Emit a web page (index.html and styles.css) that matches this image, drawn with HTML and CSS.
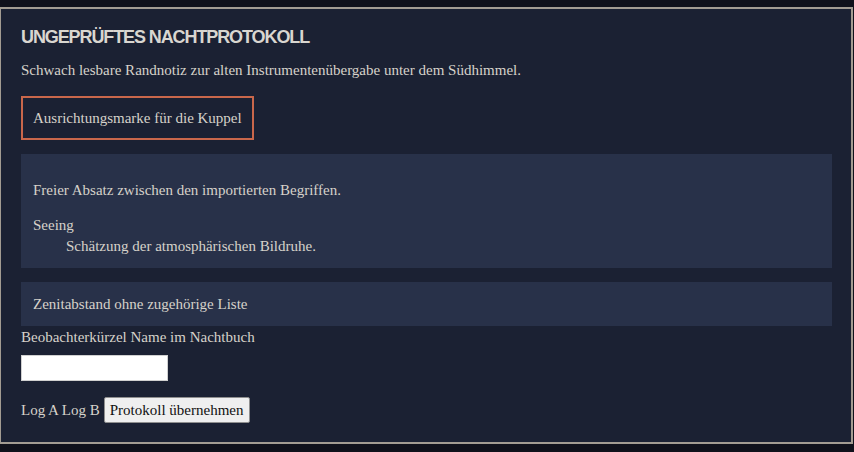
FILE: index.html
```html
<!DOCTYPE html>
<html lang="de">
<head>
<meta charset="utf-8">
<title>Nachtprotokoll</title>
<link rel="stylesheet" href="styles.css">
</head>
<body>
<main class="frame">
  <h1 class="title">UNGEPRÜFTES NACHTPROTOKOLL</h1>
  <p class="note">Schwach lesbare Randnotiz zur alten Instrumentenübergabe unter dem Südhimmel.</p>
  <div class="mark">Ausrichtungsmarke für die Kuppel</div>
  <section class="panel panel-terms">
    <p class="free">Freier Absatz zwischen den importierten Begriffen.</p>
    <dl class="terms">
      <dt>Seeing</dt>
      <dd>Schätzung der atmosphärischen Bildruhe.</dd>
    </dl>
  </section>
  <section class="panel panel-single">Zenitabstand ohne zugehörige Liste</section>
  <label class="field-label" for="obs">Beobachterkürzel Name im Nachtbuch</label>
  <input class="field" id="obs" type="text">
  <div class="actions">
    <span class="logs">Log A Log B</span>
    <button class="submit" type="button">Protokoll übernehmen</button>
  </div>
</main>
</body>
</html>
```
FILE: styles.css
```css
html, body {
  margin: 0;
  padding: 0;
  background: #10111b;
}
body {
  padding-top: 7px;
  height: 452px;
  box-sizing: border-box;
}
.frame {
  display: flex;
  flex-direction: column;
  align-items: flex-start;
  width: 853px;
  height: 437px;
  box-sizing: border-box;
  border: 2px solid #a39c92;
  border-left-width: 1px;
  background: #1b2133;
  padding: 16px 19px 0 20px;
  color: #d6d2ca;
  font-family: "Liberation Serif", "Times New Roman", serif;
  font-size: 15px;
  line-height: 20px;
}
.title {
  margin: 0;
  font-family: "Liberation Sans", Arial, sans-serif;
  font-weight: bold;
  font-size: 18px;
  letter-spacing: -1.1px;
  line-height: 24px;
  color: #d9d6d0;
}
.note {
  margin: 11px 0 0;
}
.mark {
  margin-top: 16px;
  border: 2px solid #c9674b;
  padding: 10px 10px;
}
.panel {
  align-self: stretch;
  background: #283149;
  padding: 12px;
}
.panel-terms {
  margin-top: 14px;
  padding-top: 26px;
}
.free {
  margin: 0 0 15px;
}
.terms {
  margin: 0;
}
.terms dt {
  margin: 0;
}
.terms dd {
  margin: 1px 0 0 33px;
}
.panel-single {
  margin-top: 14px;
}
.field-label {
  margin-top: 1px;
}
.field {
  margin: 8px 0 0;
  width: 147px;
  height: 26px;
  box-sizing: border-box;
  border: 1px solid #d0d0d0;
  background: #ffffff;
  padding: 2px 4px;
}
.actions {
  margin-top: 16px;
  display: flex;
  align-items: center;
  gap: 4px;
}
.submit {
  font-family: "Liberation Serif", "Times New Roman", serif;
  font-size: 15px;
  color: #111;
  background: #efefef;
  border: 1px solid #8f8f8f;
  border-radius: 2px;
  height: 26px;
  padding: 0 5px;
}
```
